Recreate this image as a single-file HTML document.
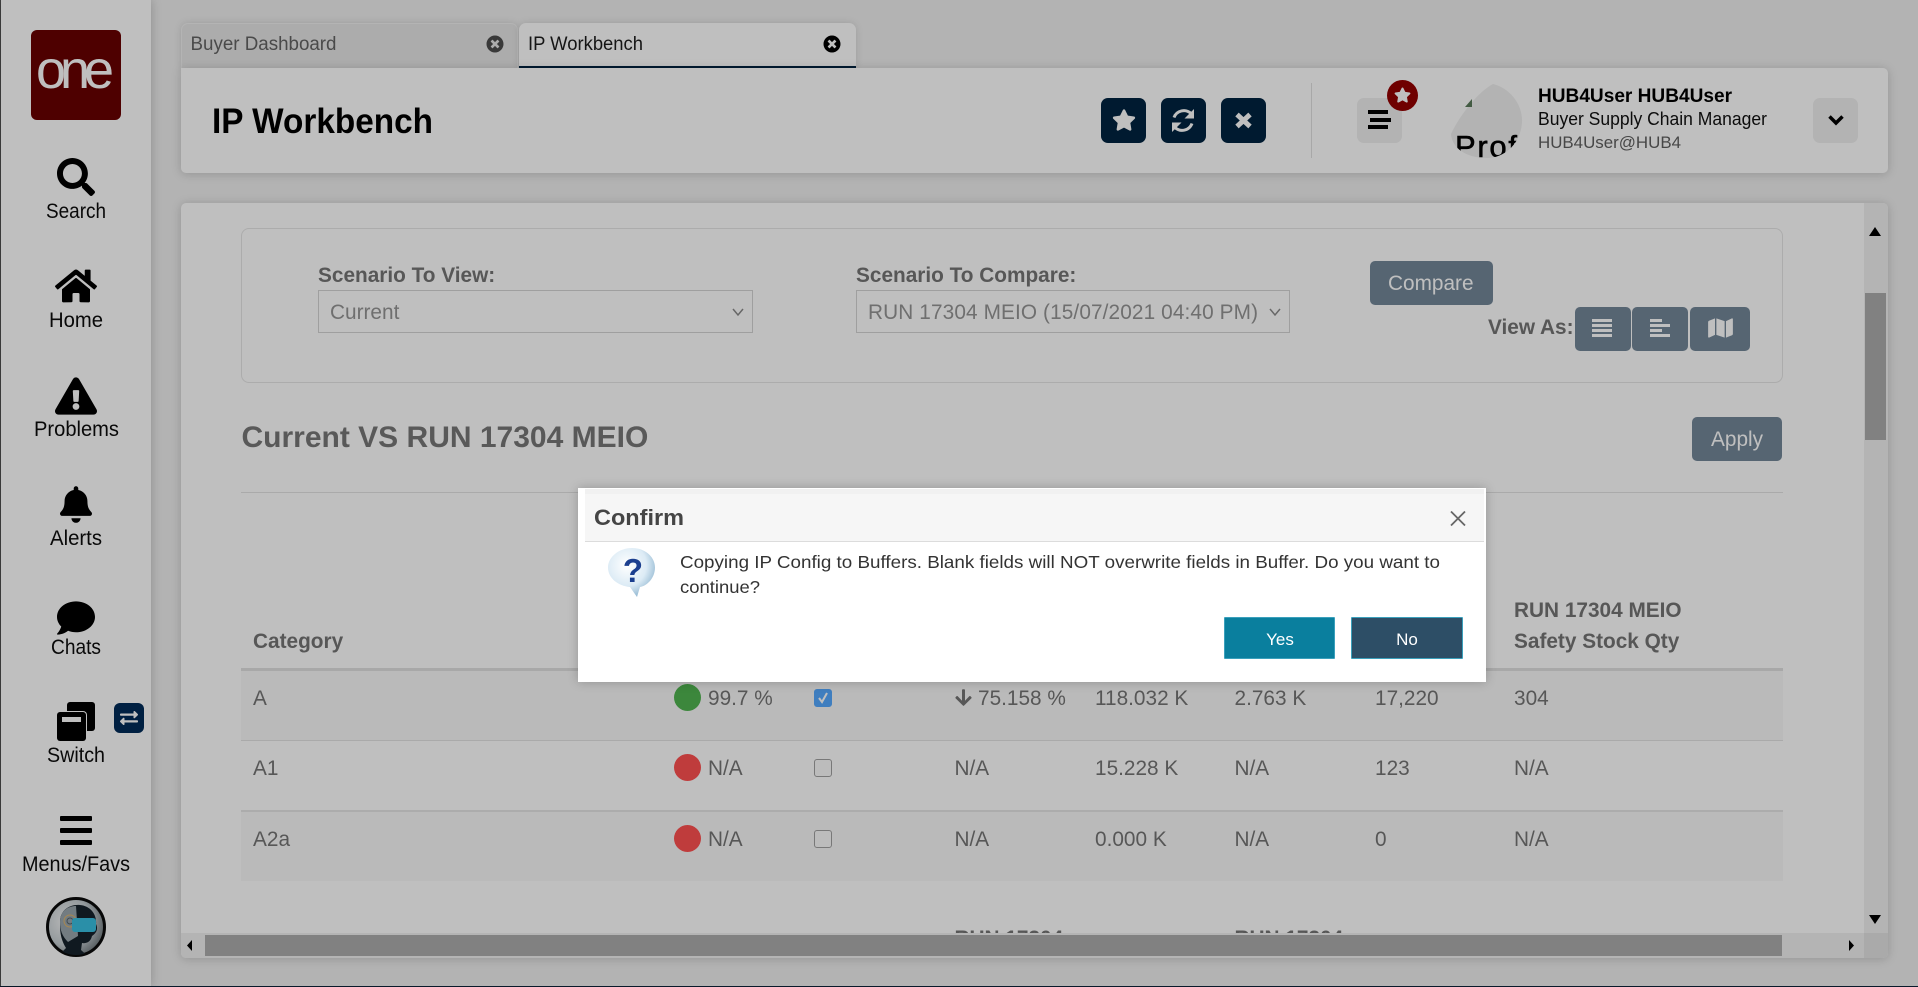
<!DOCTYPE html>
<html lang="en">
<head>
<meta charset="utf-8">
<title>IP Workbench</title>
<style>
html,body{margin:0;padding:0;width:1918px;height:987px;overflow:hidden;background:#efefef;font-family:"Liberation Sans",sans-serif}
.a{position:absolute;box-sizing:border-box}
svg{position:absolute;overflow:visible}
.navy{background:#002340;border-radius:7px}
.grey{background:#efefef;border-radius:7px}
.btn{background:#738799;border-radius:5px}
.ln{background:#e3e3e3;left:241px;width:1542px}
.sel{background:transparent;border:1px solid #d4d4d4;height:43px;top:290px}
.dot{width:27px;height:27px;border-radius:50%;left:674px}
.cb{left:814px;width:18px;height:18px;border:1.5px solid #a0a0a0;border-radius:3px;background:#fbfbfb}
.t{font-family:"Liberation Sans",sans-serif}
.c{fill:#757575;font-size:20.8px}
.b{fill:#757575;font-size:20.8px;font-weight:bold}
</style>
</head>
<body>
<!-- page edge strips -->
<div class="a" style="left:0;top:0;width:1px;height:987px;background:#555"></div>
<div class="a" style="left:0;top:986px;width:1918px;height:1px;background:#0b2238"></div>

<!-- sidebar -->
<div class="a" style="left:1px;top:0;width:150px;height:986px;background:#fff;box-shadow:0 0 10px rgba(0,0,0,.22)"></div>
<div class="a" style="left:31px;top:30px;width:90px;height:90px;background:#690000;border-radius:6px"></div>

<!-- tabs -->
<div class="a" style="left:181px;top:23px;width:337px;height:46px;background:#e6e6e6;border:1px solid #f0f0f0;border-bottom:0;border-radius:7px 7px 0 0;box-shadow:0 0 8px rgba(0,0,0,.12)"></div>
<div class="a" style="left:519px;top:23px;width:337px;height:46px;background:#fff;border-bottom:3px solid #002340;border-radius:7px 7px 0 0;box-shadow:0 0 8px rgba(0,0,0,.12)"></div>

<!-- header card -->
<div class="a" style="left:181px;top:68px;width:1707px;height:105px;background:#fff;border-radius:0 5px 5px 5px;box-shadow:0 1px 10px rgba(0,0,0,.18)"></div>
<div class="a navy" style="left:1101px;top:98px;width:45px;height:45px"></div>
<div class="a navy" style="left:1161px;top:98px;width:45px;height:45px"></div>
<div class="a navy" style="left:1221px;top:98px;width:45px;height:45px"></div>
<div class="a" style="left:1311px;top:83px;width:1px;height:75px;background:#e0e0e0"></div>
<div class="a grey" style="left:1357px;top:98px;width:45px;height:45px"></div>
<div class="a grey" style="left:1813px;top:98px;width:45px;height:45px"></div>
<div class="a" style="left:1387px;top:80px;width:31px;height:31px;border-radius:50%;background:#940000"></div>

<!-- main card -->
<div class="a" style="left:181px;top:203px;width:1707px;height:755px;background:#fff;border-radius:5px;box-shadow:0 1px 10px rgba(0,0,0,.18)"></div>
<div class="a" style="left:241px;top:228px;width:1542px;height:155px;border:1px solid #e6e6e6;border-radius:8px"></div>
<div class="a sel" style="left:318px;width:435px"></div>
<div class="a sel" style="left:856px;width:434px"></div>
<div class="a btn" style="left:1370px;top:261px;width:123px;height:44px"></div>
<div class="a btn" style="left:1575px;top:307px;width:56px;height:44px"></div>
<div class="a btn" style="left:1632px;top:307px;width:56px;height:44px"></div>
<div class="a btn" style="left:1690px;top:307px;width:60px;height:44px"></div>
<div class="a btn" style="left:1692px;top:417px;width:90px;height:44px"></div>
<div class="a ln" style="top:492px;height:1px"></div>

<!-- table -->
<div class="a ln" style="top:668px;height:3px;background:#e0e0e0"></div>
<div class="a" style="left:241px;top:671px;width:1542px;height:69px;background:#f9f9f9"></div>
<div class="a ln" style="top:740px;height:1px"></div>
<div class="a ln" style="top:810px;height:2px;background:#e6e6e6"></div>
<div class="a" style="left:241px;top:812px;width:1542px;height:69px;background:#f9f9f9"></div>
<div class="a dot" style="top:684px;background:#51b451"></div>
<div class="a dot" style="top:754px;background:#ff5050"></div>
<div class="a dot" style="top:825px;background:#ff5050"></div>
<div class="a cb" style="top:689px;background:#54a9ff;border-color:#54a9ff"></div>
<div class="a cb" style="top:759px"></div>
<div class="a cb" style="top:830px"></div>

<!-- text and icons layer -->
<svg width="1918" height="987" style="left:0;top:0" class="t">
  <!-- logo -->
  <text x="36" y="88" font-size="54" fill="#fff" textLength="78" lengthAdjust="spacing">one</text>

  <!-- sidebar icons -->
  <svg x="57" y="158" width="38" height="38" viewBox="0 0 512 512"><path d="M505 442.7L405.3 343c-4.5-4.5-10.6-7-17-7H372c27.6-35.3 44-79.7 44-128C416 93.1 322.9 0 208 0S0 93.1 0 208s93.1 208 208 208c48.3 0 92.7-16.4 128-44v16.3c0 6.4 2.5 12.5 7 17l99.7 99.7c9.4 9.4 24.6 9.4 33.9 0l28.3-28.3c9.4-9.4 9.4-24.6.1-34zM208 336c-70.7 0-128-57.2-128-128 0-70.7 57.2-128 128-128 70.7 0 128 57.2 128 128 0 70.7-57.2 128-128 128z"/></svg>
  <svg x="55" y="267" width="42" height="38" viewBox="0 0 576 512"><path d="M280.37 148.26L96 300.11V464a16 16 0 0 0 16 16l112.06-.29a16 16 0 0 0 15.92-16V368a16 16 0 0 1 16-16h64a16 16 0 0 1 16 16v95.64a16 16 0 0 0 16 16.05L464 480a16 16 0 0 0 16-16V300L295.67 148.26a12.19 12.19 0 0 0-15.3 0zM571.6 251.47L488 182.56V44.05a12 12 0 0 0-12-12h-56a12 12 0 0 0-12 12v72.61L318.47 43a48 48 0 0 0-61 0L4.34 251.47a12 12 0 0 0-1.6 16.9l25.5 31A12 12 0 0 0 45.15 301l235.22-193.74a12.19 12.19 0 0 1 15.3 0L530.9 301a12 12 0 0 0 16.9-1.6l25.5-31a12 12 0 0 0-1.7-16.93z"/></svg>
  <svg x="55" y="377" width="42" height="38" viewBox="0 0 576 512"><path d="M569.517 440.013C587.975 472.007 564.806 512 527.94 512H48.054c-36.937 0-59.999-40.055-41.577-71.987L246.423 24.005c18.467-32.009 64.72-31.951 83.154 0l239.94 416.008zM288 354c-25.405 0-46 20.595-46 46s20.595 46 46 46 46-20.595 46-46-20.595-46-46-46zm-43.673-165.346l7.418 136c.347 6.364 5.609 11.346 11.982 11.346h48.546c6.373 0 11.635-4.982 11.982-11.346l7.418-136c.375-6.874-5.098-12.654-11.982-12.654h-63.383c-6.884 0-12.356 5.78-11.981 12.654z"/></svg>
  <svg x="60" y="486" width="32" height="37" viewBox="0 0 448 512"><path d="M224 512c35.32 0 63.97-28.65 63.97-64H160.03c0 35.35 28.65 64 63.97 64zm215.39-149.71c-19.32-20.76-55.47-51.99-55.47-154.29 0-77.7-54.48-139.9-127.94-155.16V32c0-17.67-14.32-32-31.98-32s-31.98 14.33-31.98 32v20.84C118.56 68.1 64.08 130.3 64.08 208c0 102.3-36.15 133.53-55.47 154.29-6 6.45-8.66 14.16-8.61 21.71.11 16.4 12.98 32 32.1 32h383.8c19.12 0 32-15.6 32.1-32 .05-7.55-2.61-15.27-8.61-21.71z"/></svg>
  <svg x="57" y="599" width="38" height="38" viewBox="0 0 512 512"><path d="M256 32C114.6 32 0 125.1 0 240c0 49.6 21.4 95 57 130.7C44.5 421.1 2.7 466 2.2 466.5c-2.2 2.3-2.8 5.7-1.5 8.7S4.8 480 8 480c66.3 0 116-31.8 140.6-51.4 32.7 12.3 69 19.4 107.4 19.4 141.4 0 256-93.1 256-208S397.4 32 256 32z"/></svg>
  <rect x="67" y="702" width="28" height="29" rx="3"/>
  <rect x="56" y="711" width="31" height="31" rx="4" fill="#fff"/>
  <rect x="57" y="712" width="29" height="29" rx="3"/>
  <rect x="62" y="717" width="19" height="5" fill="#fff"/>
  <rect x="114" y="703" width="30" height="30" rx="6" fill="#002b58"/>
  <svg x="120" y="709" width="18" height="18" viewBox="0 0 512 512"><path fill="#fff" d="M0 168v-16c0-13.255 10.745-24 24-24h360V80c0-21.367 25.899-32.042 40.971-16.971l80 80c9.372 9.373 9.372 24.569 0 33.941l-80 80C409.956 271.982 384 261.456 384 240v-48H24c-13.255 0-24-10.745-24-24zm488 152H128v-48c0-21.314-25.862-32.08-40.971-16.971l-80 80c-9.372 9.373-9.372 24.569 0 33.941l80 80C102.057 463.997 128 453.437 128 432v-48h360c13.255 0 24-10.745 24-24v-16c0-13.255-10.745-24-24-24z"/></svg>
  <rect x="60" y="816" width="32" height="5" rx="1"/><rect x="60" y="828" width="32" height="5" rx="1"/><rect x="60" y="840" width="32" height="5" rx="1"/>

  <!-- avatar -->
  <defs>
    <radialGradient id="av" cx="35%" cy="40%" r="70%"><stop offset="0" stop-color="#f7f7f7"/><stop offset=".6" stop-color="#c6ced2"/><stop offset="1" stop-color="#6b7478"/></radialGradient>
    <clipPath id="avc"><circle cx="76" cy="927" r="28"/></clipPath>
    <clipPath id="pc"><path d="M1493 84C1510 88 1523 105 1522 122C1521 143 1505 158 1487 158C1466 158 1452 148 1451 134C1460 115 1478 92 1493 84Z"/></clipPath>
  </defs>
  <circle cx="76" cy="927" r="28.5" fill="url(#av)" stroke="#0a0a0a" stroke-width="3"/>
  <g clip-path="url(#avc)">
    <path d="M60 922C60 910 70 904 80 905C91 906 97 915 96 924C99 930 95 934 92 936C91 941 87 944 82 943L81 950L92 960H54L66 948C60 938 60 930 60 922Z" fill="#16222b"/>
    <path d="M60 922C60 911 68 906 76 906L78 936L68 942C62 936 60 930 60 922Z" fill="#9aa6ac"/>
    <circle cx="70" cy="921" r="6" fill="none" stroke="#e0b468" stroke-width="1"/>
    <circle cx="70" cy="921" r="3" fill="none" stroke="#55626a" stroke-width="1"/>
    <rect x="72" y="918" width="24" height="14" rx="3" fill="#38bfe0"/>
  </g>

  <!-- sidebar labels -->
  <g font-size="21" fill="#0d0d0d">
    <text x="46" y="218" textLength="60" lengthAdjust="spacingAndGlyphs">Search</text>
    <text x="49" y="327" textLength="54" lengthAdjust="spacingAndGlyphs">Home</text>
    <text x="34" y="436" textLength="85" lengthAdjust="spacingAndGlyphs">Problems</text>
    <text x="50" y="545" textLength="52" lengthAdjust="spacingAndGlyphs">Alerts</text>
    <text x="51" y="654" textLength="50" lengthAdjust="spacingAndGlyphs">Chats</text>
    <text x="47" y="762" textLength="58" lengthAdjust="spacingAndGlyphs">Switch</text>
    <text x="22" y="871" textLength="108" lengthAdjust="spacingAndGlyphs">Menus/Favs</text>
  </g>

  <!-- tabs text -->
  <text x="190.5" y="50" font-size="19" fill="#636363" textLength="146" lengthAdjust="spacingAndGlyphs">Buyer Dashboard</text>
  <text x="528" y="50" font-size="19" fill="#1c1c1c" textLength="115" lengthAdjust="spacingAndGlyphs">IP Workbench</text>
  <svg x="486.5" y="35.5" width="17" height="17" viewBox="8 8 496 496"><path fill="#4d4d4d" d="M256 8C119 8 8 119 8 256s111 248 248 248 248-111 248-248S393 8 256 8zm121.6 313.1c4.7 4.7 4.7 12.3 0 17L338 377.6c-4.7 4.7-12.3 4.7-17 0L256 312l-65.1 65.6c-4.7 4.7-12.3 4.7-17 0L134.4 338c-4.7-4.7-4.7-12.3 0-17l65.6-65-65.6-65.1c-4.7-4.7-4.7-12.3 0-17l39.6-39.6c4.7-4.7 12.3-4.7 17 0l65 65.7 65.1-65.6c4.7-4.7 12.3-4.7 17 0l39.6 39.6c4.7 4.7 4.7 12.3 0 17L312 256l65.6 65.1z"/></svg>
  <svg x="823.5" y="35.5" width="17" height="17" viewBox="8 8 496 496"><path fill="#000" d="M256 8C119 8 8 119 8 256s111 248 248 248 248-111 248-248S393 8 256 8zm121.6 313.1c4.7 4.7 4.7 12.3 0 17L338 377.6c-4.7 4.7-12.3 4.7-17 0L256 312l-65.1 65.6c-4.7 4.7-12.3 4.7-17 0L134.4 338c-4.7-4.7-4.7-12.3 0-17l65.6-65-65.6-65.1c-4.7-4.7-4.7-12.3 0-17l39.6-39.6c4.7-4.7 12.3-4.7 17 0l65 65.7 65.1-65.6c4.7-4.7 12.3-4.7 17 0l39.6 39.6c4.7 4.7 4.7 12.3 0 17L312 256l65.6 65.1z"/></svg>

  <!-- header -->
  <text x="212" y="133" font-size="35" font-weight="bold" fill="#000" textLength="221" lengthAdjust="spacingAndGlyphs">IP Workbench</text>
  <svg x="1112" y="109" width="24" height="22" viewBox="0 0 576 512"><path fill="#fff" d="M259.3 17.8L194 150.2 47.9 171.5c-26.2 3.8-36.7 36.1-17.7 54.6l105.7 103-25 145.500c-4.5 26.3 23.2 46 46.4 33.7L288 439.6l130.7 68.7c23.2 12.2 50.9-7.4 46.4-33.7l-25-145.5 105.7-103c19-18.5 8.5-50.8-17.7-54.6L382 150.2 316.7 17.8c-11.7-23.6-45.6-23.9-57.4 0z"/></svg>
  <g fill="none" stroke="#fff" stroke-width="3">
    <path d="M1174 117.500A10.500 10.500 0 0 1 1191 113.500"/>
    <path d="M1192 123.500A10.500 10.500 0 0 1 1175 127.500"/>
  </g>
  <path fill="#fff" d="M1194 109V118.500H1184.500ZM1172 122.500H1181.500L1172 132Z"/>
  <path d="M1237 114.500L1250 126.500M1250 114.500L1237 126.500" stroke="#fff" stroke-width="5" fill="none"/>
  <rect x="1368" y="110" width="20" height="4"/><rect x="1370" y="118" width="21" height="4"/><rect x="1368" y="125" width="20" height="4"/>
  <svg x="1394" y="87" width="17" height="16" viewBox="0 0 576 512"><path fill="#fff" d="M259.3 17.8L194 150.2 47.9 171.5c-26.2 3.8-36.7 36.1-17.7 54.6l105.7 103-25 145.5c-4.5 26.3 23.2 46 46.4 33.7L288 439.6l130.7 68.7c23.2 12.2 50.9-7.4 46.4-33.7l-25-145.5 105.7-103c19-18.5 8.5-50.8-17.7-54.6L382 150.2 316.7 17.8c-11.7-23.6-45.6-23.9-57.4 0z"/></svg>
  <path d="M1493 84C1510 88 1523 105 1522 122C1521 143 1505 158 1487 158C1466 158 1452 148 1451 134C1460 115 1478 92 1493 84Z" fill="#efefef"/>
  <path d="M1472 99V107H1465Z" fill="#5a7a5a"/>
  <g clip-path="url(#pc)"><text x="1455" y="157" font-size="31" fill="#000" stroke="#000" stroke-width=".6" textLength="62" lengthAdjust="spacing">Prof</text></g>
  <text x="1538" y="102" font-size="19" font-weight="bold" fill="#000" textLength="194" lengthAdjust="spacingAndGlyphs">HUB4User HUB4User</text>
  <text x="1538" y="125" font-size="18.500" fill="#111" textLength="229" lengthAdjust="spacingAndGlyphs">Buyer Supply Chain Manager</text>
  <text x="1538" y="148" font-size="16.500" fill="#5f5f5f" textLength="143" lengthAdjust="spacingAndGlyphs">HUB4User@HUB4</text>
  <path d="M1829.500 116.500L1836 123L1842.500 116.500" fill="none" stroke="#000" stroke-width="3.500"/>

  <!-- filter panel -->
  <text class="b" x="318" y="282">Scenario To View:</text>
  <text class="b" x="856" y="282">Scenario To Compare:</text>
  <text x="330" y="319" font-size="20.800" fill="#959595">Current</text>
  <text x="868" y="319" font-size="20.800" fill="#959595" textLength="390">RUN 17304 MEIO (15/07/2021 04:40 PM)</text>
  <path d="M733 309L738 315L743 309M1270 309L1275 315L1280 309" fill="none" stroke="#8a8a8a" stroke-width="1.500"/>
  <text x="1388" y="290" font-size="20.800" fill="#fff">Compare</text>
  <text class="b" x="1488" y="334">View As:</text>
  <g fill="#fff">
    <rect x="1592" y="319" width="20" height="3"/><rect x="1592" y="324" width="20" height="3"/><rect x="1592" y="329" width="20" height="3"/><rect x="1592" y="334" width="20" height="3"/>
    <rect x="1650" y="319" width="12" height="3"/><rect x="1650" y="324" width="20" height="3"/><rect x="1650" y="329" width="12" height="3"/><rect x="1650" y="334" width="20" height="3"/>
  </g>
  <svg x="1708" y="317" width="25" height="22" viewBox="0 0 576 512"><path fill="#fff" d="M0 117.660v346.320c0 11.320 11.430 19.060 21.940 14.860L160 416V32L20.120 87.950A32.006 32.006 0 0 0 0 117.660zM192 416l192 64V96L192 32v384zM554.060 33.160L416 96v384l139.880-55.950A31.996 31.996 0 0 0 576 394.340V48.020c0-11.320-11.430-19.060-21.940-14.860z"/></svg>
  <text x="241.500" y="447" font-size="30" font-weight="bold" fill="#777">Current VS RUN 17304 MEIO</text>
  <text x="1711" y="446" font-size="20.800" fill="#fff">Apply</text>

  <!-- table text -->
  <text class="b" x="253" y="648">Category</text>
  <text class="b" x="1514" y="617">RUN 17304 MEIO</text>
  <text class="b" x="1514" y="648">Safety Stock Qty</text>
  <g class="c">
    <text class="c" x="253" y="705">A</text><text class="c" x="708" y="705">99.7 %</text><text class="c" x="978" y="705">75.158 %</text><text class="c" x="1095" y="705">118.032 K</text><text class="c" x="1234.500" y="705">2.763 K</text><text class="c" x="1375" y="705">17,220</text><text class="c" x="1514" y="705">304</text>
    <text class="c" x="253" y="775">A1</text><text class="c" x="708" y="775">N/A</text><text class="c" x="954.500" y="775">N/A</text><text class="c" x="1095" y="775">15.228 K</text><text class="c" x="1234.500" y="775">N/A</text><text class="c" x="1375" y="775">123</text><text class="c" x="1514" y="775">N/A</text>
    <text class="c" x="253" y="846">A2a</text><text class="c" x="708" y="846">N/A</text><text class="c" x="954.500" y="846">N/A</text><text class="c" x="1095" y="846">0.000 K</text><text class="c" x="1234.500" y="846">N/A</text><text class="c" x="1375" y="846">0</text><text class="c" x="1514" y="846">N/A</text>
  </g>
  <svg x="955" y="688" width="17" height="19" viewBox="0 0 448 512"><path fill="#757575" d="M413.1 222.5l22.2 22.2c9.4 9.4 9.4 24.6 0 33.9L241 473c-9.4 9.4-24.6 9.4-33.9 0L12.7 278.6c-9.4-9.4-9.4-24.6 0-33.9l22.2-22.2c9.5-9.5 25-9.3 34.3.4L184 343.4V56c0-13.3 10.7-24 24-24h32c13.3 0 24 10.7 24 24v287.4l114.8-120.5c9.3-9.8 24.8-10 34.3-.4z"/></svg>
  <path d="M819 698L822 702L827 693" fill="none" stroke="#fff" stroke-width="2"/>
  <text class="b" x="954.500" y="945">RUN 17304</text>
  <text class="b" x="1234.500" y="945">RUN 17304</text>
</svg>

<!-- scrollbars -->
<div class="a" style="left:181px;top:933px;width:1683px;height:25px;background:#f1f1f1;border-radius:0 0 0 5px"></div>
<div class="a" style="left:205px;top:935px;width:1577px;height:21px;background:#adadad"></div>
<div class="a" style="left:1864px;top:203px;width:24px;height:730px;background:#f1f1f1;border-radius:0 5px 0 0"></div>
<div class="a" style="left:1865px;top:293px;width:21px;height:147px;background:#adadad"></div>
<div class="a" style="left:1864px;top:933px;width:24px;height:25px;background:#e3e3e3;border-radius:0 0 5px 0"></div>
<svg width="1918" height="987" style="left:0;top:0">
  <path d="M1875 227L1881 236H1869ZM1875 924L1881 915H1869ZM1849 940L1854 945.500L1849 951ZM192 940L187 945.500L192 951Z" fill="#000"/>
</svg>

<!-- modal backdrop -->
<div class="a" style="left:0;top:0;width:1918px;height:987px;background:rgba(0,0,0,.25)"></div>

<!-- dialog -->
<div class="a" style="left:578px;top:488px;width:908px;height:194px;background:#fff;box-shadow:0 0 10px rgba(0,0,0,.22)"></div>
<div class="a" style="left:585px;top:489px;width:899px;height:5px;background:#f1f1f1"></div>
<div class="a" style="left:585px;top:494px;width:899px;height:48px;background:#f6f6f6;border-bottom:1px solid #dcdcdc"></div>
<div class="a" style="left:1224px;top:617px;width:111px;height:42px;background:#0a7f9e;border:1px solid #3aa0bc;border-radius:1px"></div>
<div class="a" style="left:1351px;top:617px;width:112px;height:42px;background:#2d4e66;border:1px solid #3aa0bc;border-radius:1px"></div>
<svg width="1918" height="987" style="left:0;top:0" class="t">
  <defs>
    <radialGradient id="q" cx="40%" cy="35%" r="70%"><stop offset="0" stop-color="#fff"/><stop offset=".6" stop-color="#dcebf5"/><stop offset="1" stop-color="#8db4cf"/></radialGradient>
  </defs>
  <text x="594" y="525" font-size="22" font-weight="bold" fill="#454545" textLength="90" lengthAdjust="spacingAndGlyphs">Confirm</text>
  <path d="M1451 511.500L1465 525.500M1465 511.500L1451 525.500" stroke="#666" stroke-width="1.800" fill="none"/>
  <path d="M632 548C645 548 655 557 655 567.500C655 578 647 586 640 587L637 597L630 587C618 586 608 578 608 567.500C608 557 619 548 632 548Z" fill="url(#q)"/>
  <text x="633" y="582" font-size="33" font-weight="bold" fill="#1b3f8f" text-anchor="middle">?</text>
  <text x="680" y="568" font-size="17.500" fill="#333" textLength="760" lengthAdjust="spacingAndGlyphs">Copying IP Config to Buffers. Blank fields will NOT overwrite fields in Buffer. Do you want to</text>
  <text x="680" y="593" font-size="17.500" fill="#333" textLength="80" lengthAdjust="spacingAndGlyphs">continue?</text>
  <text x="1280" y="645" font-size="17" fill="#fff" text-anchor="middle">Yes</text>
  <text x="1407" y="645" font-size="17" fill="#fff" text-anchor="middle">No</text>
</svg>
</body>
</html>
